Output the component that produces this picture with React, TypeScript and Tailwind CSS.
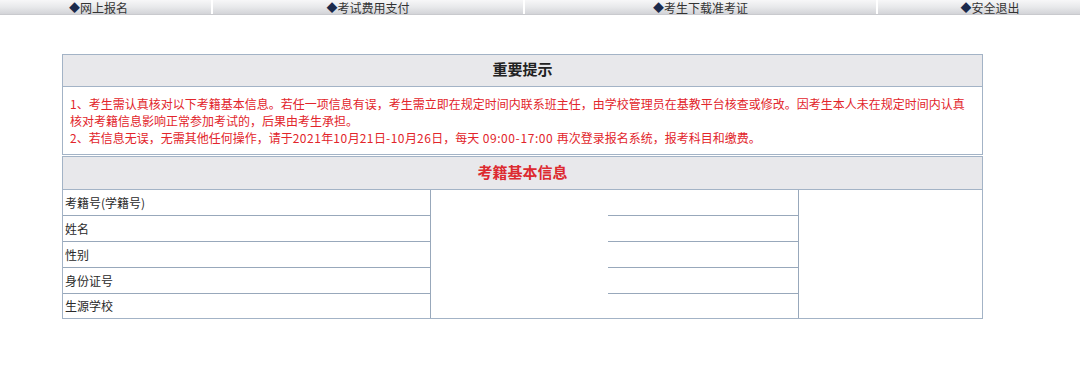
const navItems = [
  { label: "网上报名", cls: "w-[213px] pr-[14px]" },
  { label: "考试费用支付", cls: "w-[312px]" },
  { label: "考生下载准考证", cls: "w-[353px]" },
  { label: "安全退出", cls: "flex-1 pl-[22px]" },
];

const fields = ["考籍号(学籍号)", "姓名", "性别", "身份证号", "生源学校"];

export default function App() {
  return (
    <div className="min-h-screen w-[1080px] bg-white font-['SimSun','Noto_Sans_CJK_SC',sans-serif] text-[12px] text-[#2a2a2a]">
      {/* top nav */}
      <div className="flex h-[15px] border-b border-[#c9cace] bg-gradient-to-b from-[#f7f7f8] via-[#e8e9eb] to-[#d3d4d8]">
        {navItems.map((item, i) => (
          <div
            key={item.label}
            className={`${item.cls} flex items-center justify-center leading-[15px] text-[#333] ${
              i < navItems.length - 1 ? "border-r-2 border-white" : ""
            }`}
          >
            <span className="text-[#1b2a4c] text-[11px]">◆</span>
            <span>{item.label}</span>
          </div>
        ))}
      </div>

      <div className="ml-[62px] mt-[39px] w-[921px]">
        {/* notice */}
        <div className="border border-[#a3b3c6]">
          <div className="flex h-[32px] items-center justify-center border-b border-[#a3b3c6] bg-[#e8e8eb] font-['Liberation_Serif','Noto_Sans_CJK_SC',serif] text-[15px] font-semibold text-[#222]">
            重要提示
          </div>
          <div className="px-[7px] pt-[8px] pb-[8px] leading-[17px] text-[#e2252b]">
            <p>
              1、考生需认真核对以下考籍基本信息。若任一项信息有误，考生需立即在规定时间内联系班主任，由学校管理员在基教平台核查或修改。因考生本人未在规定时间内认真核对考籍信息影响正常参加考试的，后果由考生承担。
            </p>
            <p>
              2、若信息无误，无需其他任何操作，请于
              <span className="tracking-[0.5px]">2021</span>年
              <span className="tracking-[0.5px]">10</span>月
              <span className="tracking-[0.5px]">21</span>日
              <span className="tracking-[0.5px]">-10</span>月
              <span className="tracking-[0.5px]">26</span>日，每天
              <span className="tracking-[0.6px]"> 09:00-17:00 </span>
              再次登录报名系统，报考科目和缴费。
            </p>
          </div>
        </div>

        {/* base info */}
        <div className="mt-[1px] border border-[#a3b3c6]">
          <div className="flex h-[33px] items-center justify-center border-b border-[#a3b3c6] bg-[#e8e8eb] font-['Liberation_Serif','Noto_Sans_CJK_SC',serif] text-[15px] font-semibold text-[#dd2a30]">
            考籍基本信息
          </div>
          <div className="grid grid-cols-[368px_177px_191px_1fr] grid-rows-[26px_26px_26px_26px_24px]">
            {fields.map((f, i) => (
              <div
                key={f}
                className={`col-start-1 flex items-center border-r border-[#98a8bb] pl-[2px] ${
                  i < fields.length - 1 ? "border-b" : ""
                }`}
                style={{ gridRow: i + 1 }}
              >
                {f}
              </div>
            ))}
            <div className="col-start-2 row-span-5 row-start-1" />
            {fields.map((f, i) => (
              <div
                key={f + "-v"}
                className={`col-start-3 border-r border-[#98a8bb] ${
                  i < fields.length - 1 ? "border-b" : ""
                }`}
                style={{ gridRow: i + 1 }}
              />
            ))}
            <div className="col-start-4 row-span-5 row-start-1" />
          </div>
        </div>
      </div>
    </div>
  );
}
